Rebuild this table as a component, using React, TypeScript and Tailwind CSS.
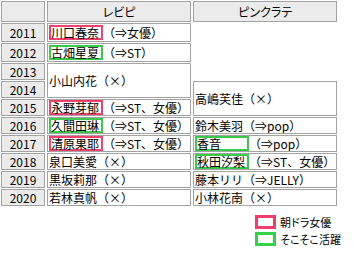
import React from "react";

type Mark = "pink" | "green";

function Box({ c, children }: { c: Mark; children: React.ReactNode }) {
  const color = c === "pink" ? "border-[#f0426c]" : "border-[#3cc84c]";
  return (
    <span className={`inline-block w-[54px] h-[15px] border-2 ${color} leading-[11px] align-top`}>
      {children}
    </span>
  );
}

const cell = "border border-[#a3a3a3] px-px py-0 align-middle whitespace-nowrap leading-[15px] overflow-hidden";
const yearCell = "border border-[#a3a3a3] bg-[#ebebeb] text-center align-middle leading-[15px] p-0";

export default function App() {
  return (
    <div className="w-[354px] h-[254px] overflow-hidden bg-white text-[12px] text-black font-['Noto_Sans_CJK_JP',sans-serif]">
      <table className="-ml-px table-fixed border-separate border-spacing-x-[2px] border-spacing-y-px">
        <colgroup>
          <col className="w-[44px]" />
          <col className="w-[143px]" />
          <col className="w-[143px]" />
        </colgroup>
        <thead>
          <tr>
            <th className={`${yearCell} h-[21px]`}></th>
            <th className={`${yearCell} h-[21px] font-normal [font-feature-settings:'palt']`}>レビピ</th>
            <th className={`${yearCell} h-[21px] font-normal [font-feature-settings:'palt']`}>ピンクラテ</th>
          </tr>
        </thead>
        <tbody>
          <tr>
            <td className={`${yearCell} h-[19px]`}>2011</td>
            <td className={cell}>
              <Box c="pink">川口春奈</Box>（⇒女優）
            </td>
          </tr>
          <tr>
            <td className={`${yearCell} h-[19px]`}>2012</td>
            <td className={cell}>
              <Box c="green">古畑星夏</Box>（⇒ST）
            </td>
          </tr>
          <tr>
            <td className={`${yearCell} h-[16px]`}>2013</td>
            <td className={cell} rowSpan={2}>
              小山内花（×）
            </td>
          </tr>
          <tr>
            <td className={`${yearCell} h-[16px]`}>2014</td>
            <td className={cell} rowSpan={2}>
              高嶋芙佳（×）
            </td>
          </tr>
          <tr>
            <td className={`${yearCell} h-[15px]`}>2015</td>
            <td className={cell}>
              <Box c="pink">永野芽郁</Box>（⇒ST、女優）
            </td>
          </tr>
          <tr>
            <td className={`${yearCell} h-[15px]`}>2016</td>
            <td className={cell}>
              <Box c="green">久間田琳</Box>（⇒ST、女優）
            </td>
            <td className={cell}>鈴木美羽（⇒pop）</td>
          </tr>
          <tr>
            <td className={`${yearCell} h-[15px]`}>2017</td>
            <td className={cell}>
              <Box c="pink">清原果耶</Box>（⇒ST、女優）
            </td>
            <td className={cell}>
              <Box c="green">香音</Box>（⇒pop）
            </td>
          </tr>
          <tr>
            <td className={`${yearCell} h-[15px]`}>2018</td>
            <td className={cell}>泉口美愛（×）</td>
            <td className={cell}>
              <Box c="green">秋田汐梨</Box>（⇒ST、女優）
            </td>
          </tr>
          <tr>
            <td className={`${yearCell} h-[15px]`}>2019</td>
            <td className={cell}>黒坂莉那（×）</td>
            <td className={cell}>藤本リリ（⇒JELLY）</td>
          </tr>
          <tr>
            <td className={`${yearCell} h-[15px]`}>2020</td>
            <td className={cell}>若林真帆（×）</td>
            <td className={cell}>小林花南（×）</td>
          </tr>
        </tbody>
      </table>

      <div className="ml-[255px] mt-[8px] flex flex-col gap-[3px] text-[11px] leading-[14px] [font-feature-settings:'palt']">
        <div className="flex items-center gap-[4px]">
          <span className="w-[21px] h-[14px] border-[3px] border-[#f03c6e]" />
          <span>朝ドラ女優</span>
        </div>
        <div className="flex items-center gap-[4px]">
          <span className="w-[21px] h-[14px] border-[3px] border-[#35d14a]" />
          <span>そこそこ活躍</span>
        </div>
      </div>
    </div>
  );
}
